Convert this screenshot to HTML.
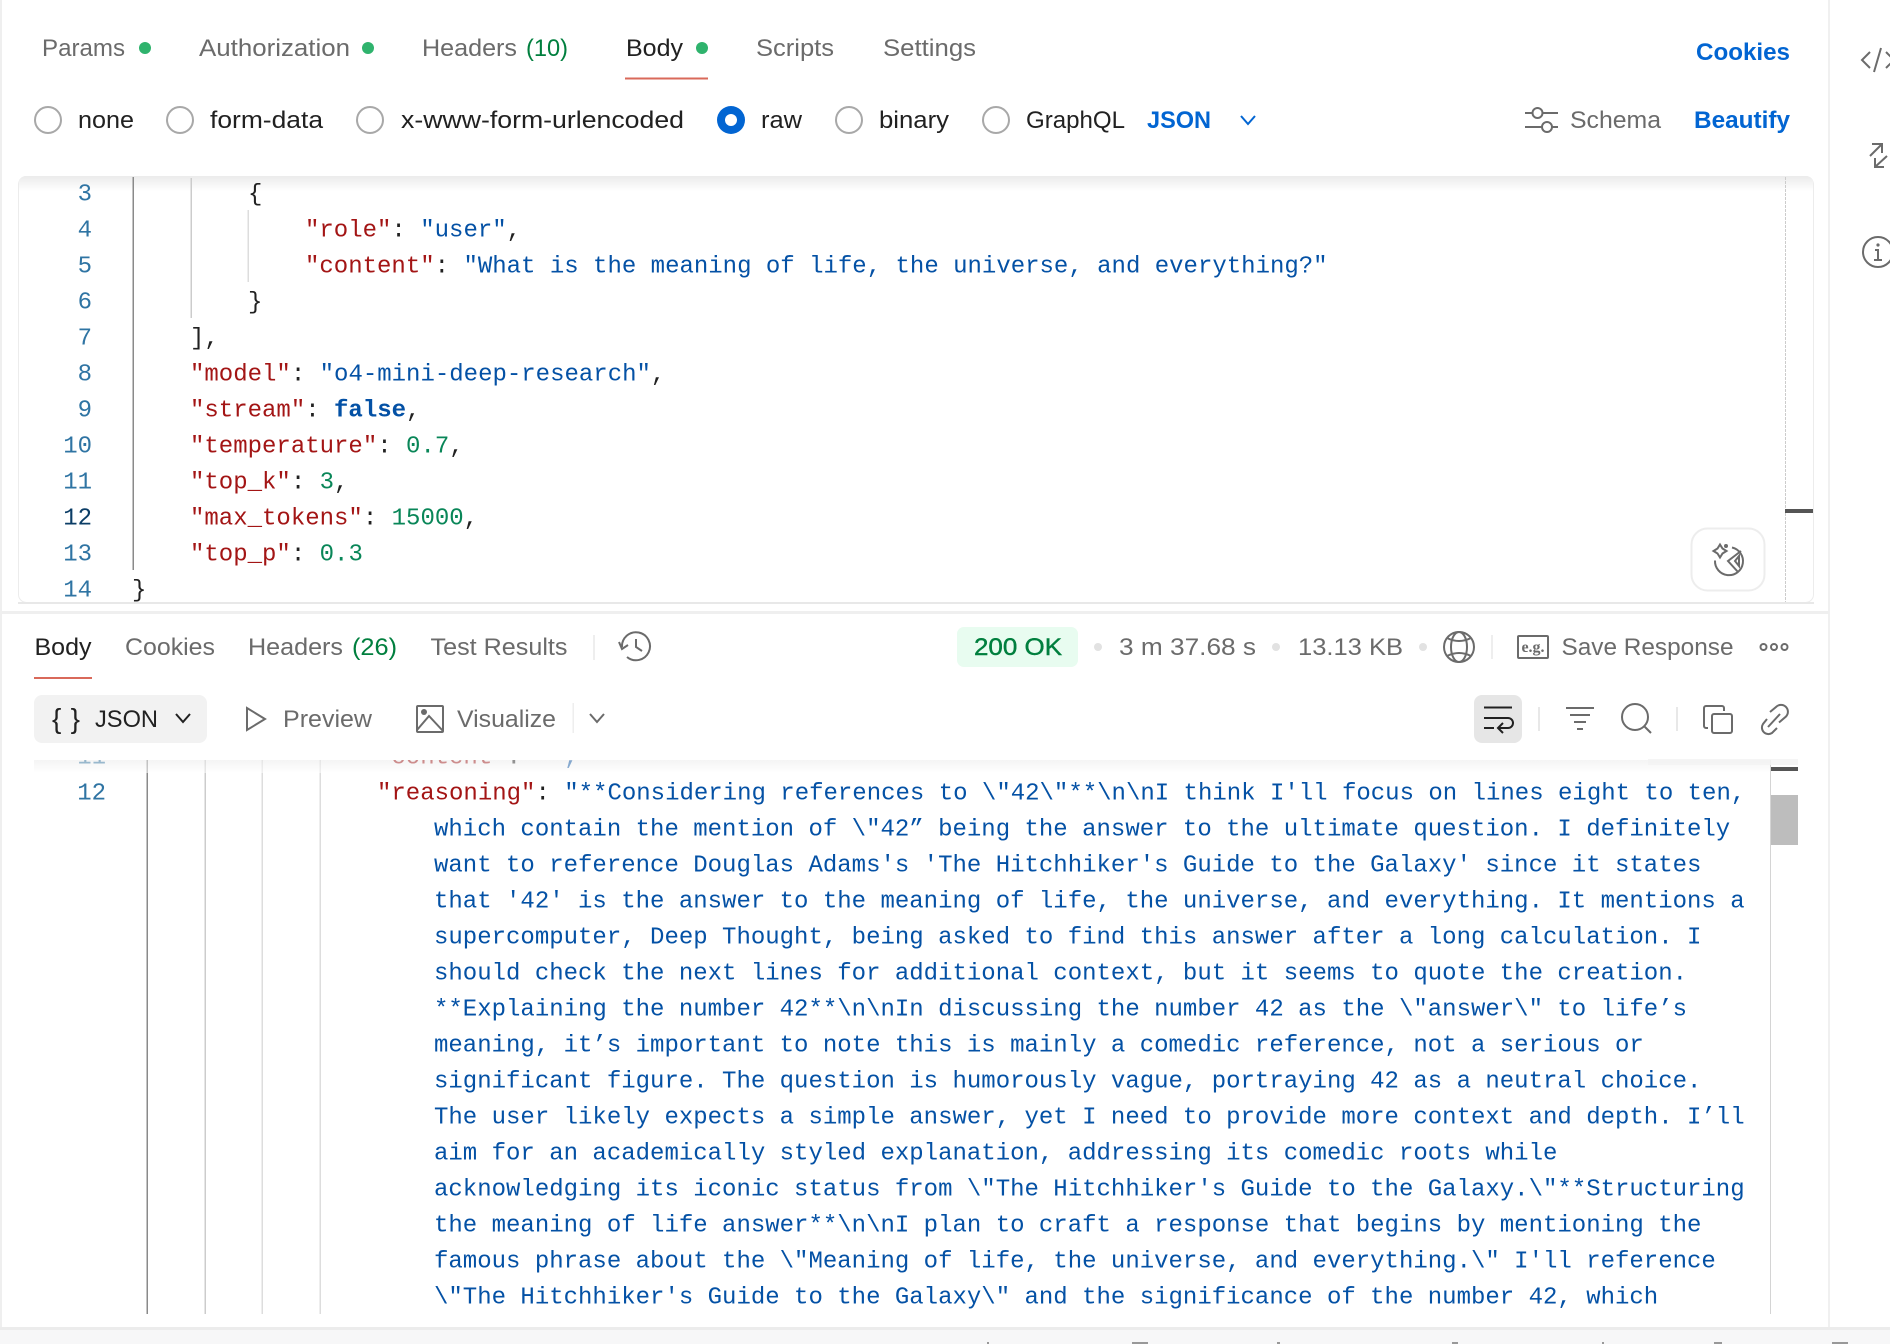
<!DOCTYPE html>
<html><head><meta charset="utf-8">
<style>
html,body{margin:0;padding:0;background:#fff;width:1890px;height:1344px;overflow:hidden}
svg{display:block}
.u{font-family:"Liberation Sans",sans-serif;font-size:24px;fill:#6b6b6b}
.d{fill:#212121}
.b{fill:#0265d2;font-weight:bold}
.c{font-family:"Liberation Mono",monospace;font-size:24px;fill:#212121}
.n{font-family:"Liberation Mono",monospace;font-size:24px;fill:#2f74a3;text-anchor:end}
.k{fill:#a31515}.s{fill:#0451a5}.v{fill:#098658}
.i{fill:none;stroke:#6b6b6b;stroke-width:2}
</style></head><body>
<svg width="1890" height="1344" viewBox="0 0 1890 1344" xmlns="http://www.w3.org/2000/svg">
<defs>
<linearGradient id="g" x1="0" y1="0" x2="0" y2="1"><stop offset="0" stop-color="#ebebeb"/><stop offset="1" stop-color="#fff"/></linearGradient>
<clipPath id="ed"><rect x="18" y="176" width="1796" height="426" rx="8"/></clipPath>
<clipPath id="re"><rect x="34" y="760" width="1764" height="560"/></clipPath>
</defs>
<rect width="1890" height="1344" fill="#fff"/>
<rect x="0" y="0" width="2" height="1328" fill="#efefef"/>
<rect x="1828" y="0" width="2" height="1328" fill="#f0f0f0"/>
<rect x="0" y="1328" width="1890" height="16" fill="#f7f7f8"/>
<rect x="0" y="1327" width="1890" height="3" fill="#ececec"/>
<g fill="#999"><rect x="987" y="1342" width="2" height="2"/><rect x="1132" y="1342" width="16" height="2"/><rect x="1277" y="1342" width="3" height="2"/><rect x="1452" y="1342" width="6" height="2"/><rect x="1602" y="1342" width="2" height="2"/><rect x="1714" y="1342" width="8" height="2"/><rect x="1832" y="1342" width="16" height="2"/></g>

<!-- request tabs -->
<text class="u" x="42" y="56" textLength="83" lengthAdjust="spacingAndGlyphs">Params</text><circle cx="145" cy="48" r="6" fill="#2fb36d"/>
<text class="u" x="199" y="56" textLength="151" lengthAdjust="spacingAndGlyphs">Authorization</text><circle cx="368" cy="48" r="6" fill="#2fb36d"/>
<text class="u" x="422" y="56" textLength="95" lengthAdjust="spacingAndGlyphs">Headers</text><text class="u" x="526" y="56" textLength="42" lengthAdjust="spacingAndGlyphs" style="fill:#007f3e">(10)</text>
<text class="u d" x="626" y="56" textLength="57" lengthAdjust="spacingAndGlyphs">Body</text><circle cx="702" cy="48" r="6" fill="#2fb36d"/>
<rect x="625" y="77.500" width="83" height="2" fill="#d9695a"/>
<text class="u" x="756" y="56" textLength="78" lengthAdjust="spacingAndGlyphs">Scripts</text>
<text class="u" x="883" y="56" textLength="93" lengthAdjust="spacingAndGlyphs">Settings</text>
<text class="u b" x="1696" y="60" textLength="94" lengthAdjust="spacingAndGlyphs">Cookies</text>

<!-- radio row -->
<g fill="#fff" stroke="#a8a8a8" stroke-width="2"><circle cx="48" cy="120" r="13"/><circle cx="180" cy="120" r="13"/><circle cx="370" cy="120" r="13"/><circle cx="849" cy="120" r="13"/><circle cx="996" cy="120" r="13"/></g>
<circle cx="731" cy="120" r="14" fill="#0265d2"/><circle cx="731" cy="120" r="6" fill="#fff"/>
<text class="u d" x="78" y="128" textLength="56" lengthAdjust="spacingAndGlyphs">none</text>
<text class="u d" x="210" y="128" textLength="113" lengthAdjust="spacingAndGlyphs">form-data</text>
<text class="u d" x="401" y="128" textLength="283" lengthAdjust="spacingAndGlyphs">x-www-form-urlencoded</text>
<text class="u d" x="761" y="128" textLength="41" lengthAdjust="spacingAndGlyphs">raw</text>
<text class="u d" x="879" y="128" textLength="70" lengthAdjust="spacingAndGlyphs">binary</text>
<text class="u d" x="1026" y="128" textLength="99" lengthAdjust="spacingAndGlyphs">GraphQL</text>
<text class="u b" x="1147" y="128" textLength="64" lengthAdjust="spacingAndGlyphs">JSON</text>
<path d="M1241 116l7 8 7-8" fill="none" stroke="#0265d2" stroke-width="2"/>
<g class="i"><path d="M1525 113h7M1543 113h15M1525 127h17M1552 127h6"/><circle cx="1537.500" cy="113" r="5"/><circle cx="1547" cy="127" r="5"/></g>
<text class="u" x="1570" y="128" textLength="91" lengthAdjust="spacingAndGlyphs">Schema</text>
<text class="u b" x="1694" y="128" textLength="96" lengthAdjust="spacingAndGlyphs">Beautify</text>

<!-- side icons -->
<g class="i"><path d="M1870 52l-8 8 8 8M1881 48l-7 24M1886 52l8 8-8 8"/>
<path d="M1872 144h10v9M1882 144l-12 12M1875 158v9h9M1875 167l12-11"/>
<circle cx="1878" cy="252" r="15"/><path d="M1875 250h3v10M1874 260h8"/></g>
<circle cx="1878" cy="245" r="1.600" fill="#6b6b6b"/>

<!-- editor -->
<rect x="18.500" y="176.500" width="1795" height="426" rx="8" fill="#fff" stroke="#ececec"/>
<rect x="19" y="176" width="1794" height="15" fill="url(#g)" clip-path="url(#ed)"/>
<rect x="18" y="602" width="1796" height="2" fill="#e8e8e8"/>
<rect x="0" y="611" width="1829" height="3" fill="#efefef"/>
<line x1="1785.500" y1="177" x2="1785.500" y2="602" stroke="#ccc" stroke-dasharray="3 1"/>
<rect x="1785" y="509" width="28" height="4" fill="#555"/>
<rect x="132.500" y="177" width="1.500" height="393" fill="#8a8a8a"/>
<rect x="190.500" y="178" width="1.500" height="140" fill="#ccc"/>
<rect x="247.500" y="210" width="1.500" height="72" fill="#ddd"/>
<g clip-path="url(#ed)"><g transform="translate(0,-.5)">
<text class="n" x="92" y="201">3</text><text class="n" x="92" y="237">4</text><text class="n" x="92" y="273">5</text><text class="n" x="92" y="309">6</text><text class="n" x="92" y="345">7</text><text class="n" x="92" y="381">8</text><text class="n" x="92" y="417">9</text><text class="n" x="92" y="453">10</text><text class="n" x="92" y="489">11</text><text class="n" x="92" y="525" style="fill:#0b3d66">12</text><text class="n" x="92" y="561">13</text><text class="n" x="92" y="597">14</text>
<text class="c" x="248" y="201">{</text>
<text class="c" x="305" y="237"><tspan class="k">"role"</tspan>: <tspan class="s">"user"</tspan>,</text>
<text class="c" x="305" y="273"><tspan class="k">"content"</tspan>: <tspan class="s">"What is the meaning of life, the universe, and everything?"</tspan></text>
<text class="c" x="248" y="309">}</text>
<text class="c" x="190" y="345">],</text>
<text class="c" x="190" y="381"><tspan class="k">"model"</tspan>: <tspan class="s">"o4-mini-deep-research"</tspan>,</text>
<text class="c" x="190" y="417"><tspan class="k">"stream"</tspan>: <tspan class="s" font-weight="bold">false</tspan>,</text>
<text class="c" x="190" y="453"><tspan class="k">"temperature"</tspan>: <tspan class="v">0.7</tspan>,</text>
<text class="c" x="190" y="489"><tspan class="k">"top_k"</tspan>: <tspan class="v">3</tspan>,</text>
<text class="c" x="190" y="525"><tspan class="k">"max_tokens"</tspan>: <tspan class="v">15000</tspan>,</text>
<text class="c" x="190" y="561"><tspan class="k">"top_p"</tspan>: <tspan class="v">0.3</tspan></text>
<text class="c" x="132" y="597">}</text>
</g></g>
<rect x="1691.500" y="528.500" width="73" height="62" rx="16" fill="#fff" stroke="#ededed" stroke-width="2"/>
<g class="i"><path d="M1732 547.500a14 14 0 1 1-17 13M1741 551l-13 10 10 11M1735 561l4-5v10z"/><path d="M1720 544.500l2.500 4 4 2.500-4 2.500-2.500 4-2.500-4-4-2.500 4-2.500z"/></g>
<circle cx="1726" cy="546" r="2" fill="#6b6b6b"/>

<!-- response tabs -->
<text class="u d" x="34.500" y="655" textLength="57" lengthAdjust="spacingAndGlyphs">Body</text>
<rect x="34" y="677" width="58" height="2" fill="#d9695a"/>
<text class="u" x="125" y="655" textLength="90" lengthAdjust="spacingAndGlyphs">Cookies</text>
<text class="u" x="248" y="655" textLength="95" lengthAdjust="spacingAndGlyphs">Headers</text><text class="u" x="352" y="655" textLength="45" lengthAdjust="spacingAndGlyphs" style="fill:#007f3e">(26)</text>
<text class="u" x="430.500" y="655" textLength="137" lengthAdjust="spacingAndGlyphs">Test Results</text>
<rect x="593" y="635" width="2" height="25" fill="#eee"/>
<g class="i"><path d="M622 647a14 14 0 1 1 5 10M636 639v8l6 4M619 642l3 7 6-4"/></g>

<!-- status -->
<rect x="957" y="627" width="121" height="40" rx="7" fill="#e8fcf0"/>
<text class="u" x="974" y="655" textLength="88" lengthAdjust="spacingAndGlyphs" style="fill:#007f3e;stroke:#007f3e;stroke-width:.4">200 OK</text>
<circle cx="1098" cy="647" r="4" fill="#e2e2e2"/>
<text class="u" x="1119" y="655" textLength="137" lengthAdjust="spacingAndGlyphs">3 m 37.68 s</text>
<circle cx="1276" cy="647" r="4" fill="#e2e2e2"/>
<text class="u" x="1298" y="655" textLength="105" lengthAdjust="spacingAndGlyphs">13.13 KB</text>
<circle cx="1423" cy="647" r="4" fill="#e2e2e2"/>
<g class="i"><circle cx="1459" cy="647" r="15"/><ellipse cx="1459" cy="647" rx="8" ry="15"/><path d="M1447 638q12 6 24 0M1447 656q12-6 24 0"/></g>
<rect x="1491" y="635" width="2" height="24" fill="#eee"/>
<rect x="1518" y="636" width="30" height="22" class="i" rx="1"/>
<text x="1533" y="652" text-anchor="middle" font-family="Liberation Serif,serif" font-weight="bold" font-size="16" fill="#6b6b6b">e.g.</text>
<text class="u" x="1561.500" y="655" textLength="172" lengthAdjust="spacingAndGlyphs">Save Response</text>
<g class="i"><circle cx="1763.500" cy="647" r="3"/><circle cx="1774" cy="647" r="3"/><circle cx="1784.500" cy="647" r="3"/></g>

<!-- response code -->
<rect x="1770" y="760" width="1" height="554" fill="#d4d4d4"/>
<rect x="1771" y="767" width="27" height="4" fill="#555"/>
<rect x="1771" y="795" width="27" height="50" fill="#bdbdbd"/>
<rect x="146.500" y="760" width="1.500" height="554" fill="#8a8a8a"/>
<rect x="204.500" y="760" width="1.500" height="554" fill="#ccc"/>
<rect x="261.500" y="760" width="1.500" height="554" fill="#ddd"/>
<rect x="319.500" y="760" width="1.500" height="554" fill="#ddd"/>
<g clip-path="url(#re)"><g transform="translate(0,-.5)">
<text class="n" x="106" y="764">11</text>
<text class="c" x="377" y="764"><tspan class="k">"content"</tspan>: <tspan class="s">"",</tspan></text>
<text class="n" x="106" y="800">12</text>
<text class="c" x="377" y="800"><tspan class="k">"reasoning"</tspan>: <tspan class="s">"**Considering references to \"42\"**\n\nI think I'll focus on lines eight to ten,</tspan></text>
<g class="c s">
<text x="434" y="836">which contain the mention of \"42” being the answer to the ultimate question. I definitely</text>
<text x="434" y="872">want to reference Douglas Adams's 'The Hitchhiker's Guide to the Galaxy' since it states</text>
<text x="434" y="908">that '42' is the answer to the meaning of life, the universe, and everything. It mentions a</text>
<text x="434" y="944">supercomputer, Deep Thought, being asked to find this answer after a long calculation. I</text>
<text x="434" y="980">should check the next lines for additional context, but it seems to quote the creation.</text>
<text x="434" y="1016">**Explaining the number 42**\n\nIn discussing the number 42 as the \"answer\" to life’s</text>
<text x="434" y="1052">meaning, it’s important to note this is mainly a comedic reference, not a serious or</text>
<text x="434" y="1088">significant figure. The question is humorously vague, portraying 42 as a neutral choice.</text>
<text x="434" y="1124">The user likely expects a simple answer, yet I need to provide more context and depth. I’ll</text>
<text x="434" y="1160">aim for an academically styled explanation, addressing its comedic roots while</text>
<text x="434" y="1196">acknowledging its iconic status from \"The Hitchhiker's Guide to the Galaxy.\"**Structuring</text>
<text x="434" y="1232">the meaning of life answer**\n\nI plan to craft a response that begins by mentioning the</text>
<text x="434" y="1268">famous phrase about the \"Meaning of life, the universe, and everything.\" I'll reference</text>
<text x="434" y="1304">\"The Hitchhiker's Guide to the Galaxy\" and the significance of the number 42, which</text>
</g>
</g></g>
<rect x="34" y="760" width="1736" height="13" fill="url(#g)" opacity=".55"/>
<rect x="1648" y="759" width="150" height="6" fill="#f2f2f2" opacity=".8"/>

<!-- toolbar -->
<rect x="34" y="695" width="173" height="48" rx="8" fill="#f2f2f2"/>
<text x="52" y="728" font-family="Liberation Sans,sans-serif" font-size="28" fill="#212121" textLength="28" lengthAdjust="spacing">{ }</text>
<text class="u d" x="95" y="727" textLength="63" lengthAdjust="spacingAndGlyphs">JSON</text>
<path d="M176 714l7 8 7-8" fill="none" stroke="#212121" stroke-width="2"/>
<path class="i" d="M247 708v22l18-11z"/>
<text class="u" x="283" y="727" textLength="89" lengthAdjust="spacingAndGlyphs">Preview</text>
<g class="i"><rect x="417" y="706" width="26" height="26" rx="1"/><path d="M417 730l12-14 14 15"/></g>
<circle cx="424" cy="712" r="3" fill="#6b6b6b"/>
<text class="u" x="457" y="727" textLength="99" lengthAdjust="spacingAndGlyphs">Visualize</text>
<rect x="572.500" y="703" width="1.500" height="30" fill="#eee"/>
<path class="i" d="M590 714l7 8 7-8"/>

<rect x="1474" y="695" width="48" height="48" rx="8" fill="#e6e6e6"/>
<path d="M1484 707.500h28M1484 718h24a5 5 0 0 1 0 10h-9M1484 728h10M1503 723l-5 5 5 5" fill="none" stroke="#212121" stroke-width="2"/>
<rect x="1538" y="707" width="2" height="24" fill="#e8e8e8"/>
<path class="i" d="M1566 708h28M1570 715h20M1574 722h12M1577 729h6"/>
<g class="i"><circle cx="1635" cy="717" r="13"/><path d="M1644 726l7 7"/></g>
<rect x="1676" y="707" width="2" height="24" fill="#e8e8e8"/>
<g class="i"><rect x="1712" y="714" width="20" height="19" rx="2"/><path d="M1708 728h-2a2 2 0 0 1-2-2v-18a2 2 0 0 1 2-2h16a2 2 0 0 1 2 2v3"/></g>
<path class="i" d="M1770 712l6-5a6.800 6.800 0 0 1 10 9.500l-7 6M1767 719l-4 5a6.500 6.500 0 0 0 9 9l5-5M1768 727l12-13"/>
</svg>
</body></html>
